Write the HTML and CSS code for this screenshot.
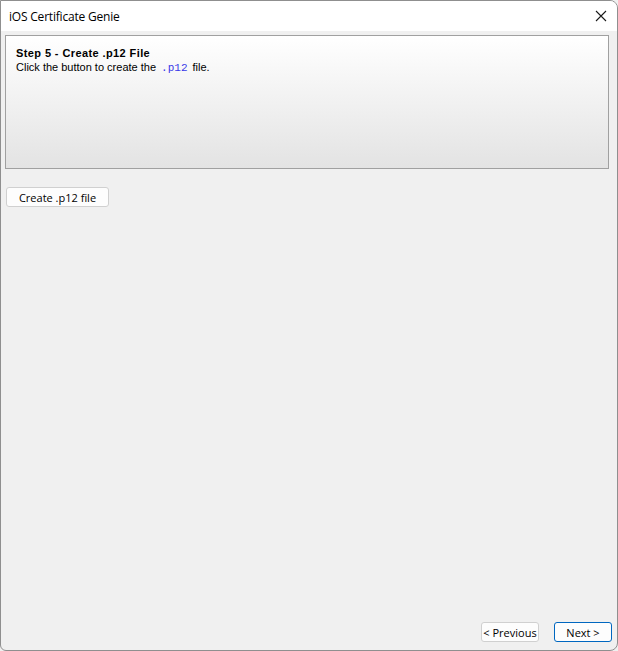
FILE: index.html
```html
<!DOCTYPE html>
<html>
<head>
<meta charset="utf-8">
<link rel="stylesheet" href="styles.css">
</head>
<body>
<div class="window">
  <div class="titlebar">
    <span class="title">iOS Certificate Genie</span>
    <svg class="close" width="12" height="12" viewBox="0 0 12 12"><path d="M1 1 L11 11 M11 1 L1 11" stroke="#1a1a1a" stroke-width="1.1" fill="none"/></svg>
  </div>
  <div class="content">
    <div class="header">
      <div class="step">Step 5 - Create .p12 File</div>
      <div class="desc">Click the button to create the <code class="code">.p12</code> file.</div>
    </div>
    <div class="actions">
      <button class="btn create">Create .p12 file</button>
    </div>
    <div class="footer">
      <button class="btn nav">&lt; Previous</button>
      <button class="btn nav primary">Next &gt;</button>
    </div>
  </div>
</div>
</body>
</html>
```

FILE: styles.css
```css
html, body {
  margin: 0;
  padding: 0;
  background: #f0f0f0;
}
.window {
  width: 618px;
  height: 651px;
  box-sizing: border-box;
  border: 1px solid #8f8f8f;
  border-radius: 0 8px 8px 6px;
  overflow: hidden;
  display: flex;
  flex-direction: column;
  background: #f0f0f0;
}
.titlebar {
  height: 30px;
  background: #ffffff;
  display: flex;
  align-items: center;
  justify-content: space-between;
  padding: 0 10px 0 8px;
  flex: none;
}
.title {
  font-family: "Open Sans", "Liberation Sans", sans-serif;
  font-size: 12px;
  color: #000;
  letter-spacing: -0.2px;
}
.close {
  display: block;
}
.content {
  flex: 1;
  display: flex;
  flex-direction: column;
  padding: 4px 8px 8px 4px;
  font-family: "Liberation Sans", Arial, sans-serif;
  font-size: 11px;
}
.header {
  height: 134px;
  box-sizing: border-box;
  border: 1px solid #a0a0a0;
  background: linear-gradient(#ffffff, #e3e3e3);
  padding: 11px 10px;
  color: #000;
}
.step {
  font-weight: bold;
  line-height: 13px;
  letter-spacing: 0.4px;
}
.desc {
  line-height: 14px;
}
.code {
  font-family: "Liberation Mono", "Courier New", monospace;
  font-size: 11px;
  color: #3838e8;
  padding: 0 2px;
}
.actions {
  margin-top: 18px;
  padding-left: 1px;
}
.btn {
  font-family: "Open Sans", "Liberation Sans", sans-serif;
  font-size: 11px;
  height: 20px;
  box-sizing: border-box;
  border: 1px solid #d0d0d0;
  border-radius: 3px;
  background: #fdfdfd;
  color: #000;
  padding: 0;
  line-height: 17px;
}
.create {
  width: 103px;
}
.footer {
  margin-top: auto;
  display: flex;
  justify-content: flex-end;
  gap: 15px;
  margin-right: -3px;
}
.nav {
  width: 58px;
}
.primary {
  border-color: #0067c0;
}
```
